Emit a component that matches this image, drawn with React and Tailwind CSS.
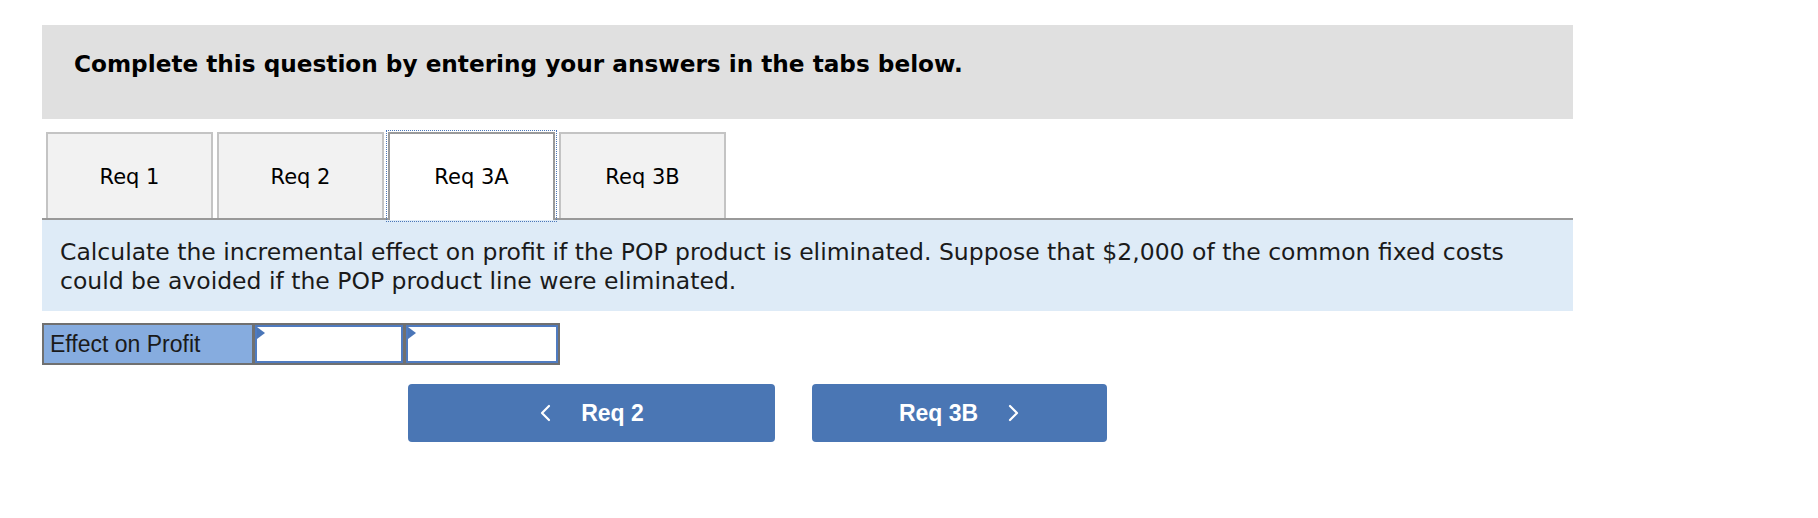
import React from 'react';

const verdana = { fontFamily: '"DejaVu Sans", Verdana, sans-serif' };

const tabs = ['Req 1', 'Req 2', 'Req 3A', 'Req 3B'];

const Tab = ({ label, active }) => (
  <div
    className={
      active
        ? 'relative z-10 -mb-[2px] flex h-[88px] w-[167px] items-center justify-center border-2 border-b-0 border-[#9a9a9a] bg-white pt-[2px] text-[21px] text-black outline-1 outline-offset-1 outline-dotted outline-[#4a76b8]'
        : 'flex h-[86px] w-[167px] items-center justify-center border-2 border-b-0 border-[#c4c4c4] bg-[#f2f2f2] pt-[4px] text-[21px] text-black'
    }
  >
    {label}
  </div>
);

const InputCell = ({ width }) => (
  <div className={`relative h-full border-2 border-[#4f7bc0] bg-white ${width}`}>
    <span className="absolute left-0 top-0 h-0 w-0 border-y-[6px] border-l-[8px] border-y-transparent border-l-[#4a76b8]" />
  </div>
);

const Chevron = ({ dir }) => (
  <svg width="12" height="18" viewBox="0 0 12 18" fill="none" stroke="white" strokeWidth="2.2" strokeLinecap="round" strokeLinejoin="round">
    {dir === 'left' ? <polyline points="10,2 3,9 10,16" /> : <polyline points="2,2 9,9 2,16" />}
  </svg>
);

export default function App() {
  return (
    <div className="min-h-[518px] bg-white pl-[42px] pt-[25px]">
      <div className="w-[1531px]" style={verdana}>
        <div className="h-[94px] bg-[#e0e0e0] pl-[32px] pt-[25px]">
          <h2 className="text-[23.2px] font-bold leading-[28px] text-black">
            Complete this question by entering your answers in the tabs below.
          </h2>
        </div>

        <div className="mt-[13px] flex gap-[4px] border-b-2 border-[#999999] pl-[4px]">
          {tabs.map(t => (
            <Tab key={t} label={t} active={t === 'Req 3A'} />
          ))}
        </div>

        <div className="h-[91px] bg-[#deebf7] pl-[18px] pt-[18px]">
          <p className="w-[1475px] text-[23.5px] leading-[29px] text-[#1a1a1a]">
            Calculate the incremental effect on profit if the POP product is eliminated. Suppose that $2,000 of the common fixed costs could be avoided if the POP product line were eliminated.
          </p>
        </div>
      </div>

      <div
        className="mt-[12px] flex h-[42px] w-[518px] gap-[3px] bg-[#707070] p-[2px]"
        style={{ fontFamily: '"Liberation Sans", Arial, sans-serif' }}
      >
        <div className="flex h-full w-[208px] items-center bg-[#86acdf] pl-[6px] text-[23px] text-[#1a1a1a]">
          Effect on Profit
        </div>
        <InputCell width="w-[148px]" />
        <InputCell width="w-[152px]" />
      </div>

      <div
        className="ml-[366px] mt-[19px] flex gap-[37px]"
        style={{ fontFamily: '"Liberation Sans", Arial, sans-serif' }}
      >
        <button className="flex h-[58px] w-[367px] items-center justify-center gap-[30px] rounded-[4px] bg-[#4a76b4] text-[23px] font-bold text-white">
          <Chevron dir="left" />
          <span>Req 2</span>
        </button>
        <button className="flex h-[58px] w-[295px] items-center justify-center gap-[30px] rounded-[4px] bg-[#4a76b4] text-[23px] font-bold text-white">
          <span>Req 3B</span>
          <Chevron dir="right" />
        </button>
      </div>
    </div>
  );
}
